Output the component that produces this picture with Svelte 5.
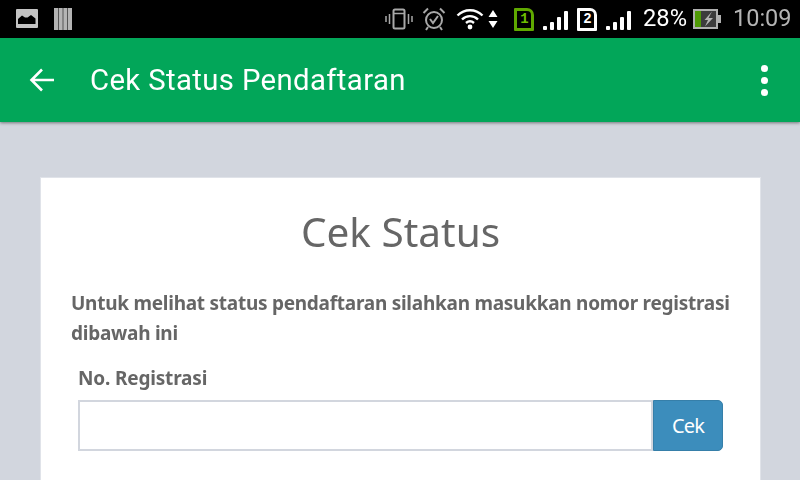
<script>
  const bars = [4, 8, 13, 19];
</script>

<div class="screen">
  <header class="status">
    <div class="left">
      <svg width="24" height="20" viewBox="0 0 24 20"><rect x="0" y="0" width="22" height="19" rx="1" fill="#c4c4c4"/><path d="M2 15V10L6 6.500L9 8.500H11.500L15 6L19.500 9.500V15Z" fill="#000"/></svg>
      <svg width="20" height="22" viewBox="0 0 20 22"><rect x="0" y="0" width="18" height="22" fill="#b4b4b4"/><path d="M4.500 0V22M9 0V22M13.500 0V22" stroke="#555" stroke-width="1"/></svg>
    </div>
    <div class="right">
      <svg class="vib" width="28" height="24" viewBox="0 0 28 24" fill="none" stroke="#a8a8a8"><rect x="8.500" y="2.500" width="11" height="19" rx="1.500" stroke-width="2"/><path d="M9 6.500H19" stroke-width="1.500"/><path d="M4.500 7V17M1 9V15M23.500 7V17M27 9V15" stroke-width="1.500"/></svg>
      <svg class="alarm" width="24" height="24" viewBox="0 0 24 24" fill="none" stroke="#a8a8a8" stroke-width="2"><circle cx="12" cy="13" r="8"/><path d="M8 12L11 16L16 9M1.500 6L6 1.500M22.500 6L18 1.500M6 20L4 23M18 20L20 23"/></svg>
      <svg class="wifi" width="28" height="22" viewBox="0 0 28 22" fill="none" stroke="#fff" stroke-width="2.400"><path d="M1.500 7.500C8.500 .5 19.500 .5 26.500 7.500M6 11.500C10.500 7 17.500 7 22 11.500M10 15C12.500 12.800 15.500 12.800 18 15"/><circle cx="14" cy="19" r="2.400" fill="#fff" stroke="none"/></svg>
      <svg class="updown" width="10" height="20" viewBox="0 0 10 20" fill="#fff"><path d="M5 1L9.500 8H.5ZM5 19L9.500 12H.5Z"/></svg>
      <div class="sim one"><span>1</span></div>
      <svg class="signal" width="26" height="22" viewBox="0 0 26 22" fill="#fff">
        {#each bars as h, i}<rect x={i * 7} y={22 - h} width="4" height={h} rx="1"/>{/each}
      </svg>
      <div class="sim two"><span>2</span></div>
      <svg class="signal second" width="26" height="22" viewBox="0 0 26 22" fill="#fff">
        {#each bars as h, i}<rect x={i * 7} y={22 - h} width="4" height={h} rx="1"/>{/each}
      </svg>
      <span class="pct">28%</span>
      <svg class="batt" width="29" height="20" viewBox="0 0 29 20"><rect x="1" y="1" width="23" height="18" fill="#3c3c3c" stroke="#b0b0b0" stroke-width="2"/><rect x="2" y="2" width="6" height="16" fill="#4f9a06"/><rect x="25" y="6" width="3" height="8" fill="#b0b0b0"/><path d="M19 2.500L11.500 11H15L12 17.500L20 9H15.500Z" fill="#b4b4b4"/></svg>
      <span class="time">10:09</span>
    </div>
  </header>

  <div class="appbar">
    <svg class="back" width="26" height="24" viewBox="0 0 26 24" fill="none" stroke="#fff" stroke-width="2.600"><path d="M25 12H3M13 1.500L2.500 12L13 22.500"/></svg>
    <h1>Cek Status Pendaftaran</h1>
    <div class="dots"><i></i><i></i><i></i></div>
  </div>

  <main>
    <section class="card">
      <h2>Cek Status</h2>
      <p>Untuk melihat status pendaftaran silahkan masukkan nomor registrasi dibawah ini</p>
      <div class="form">
        <label for="reg">No. Registrasi</label>
        <div class="group">
          <input id="reg" type="text" />
          <button type="button">Cek</button>
        </div>
      </div>
    </section>
  </main>
</div>

<style>
  :global(body) { margin: 0; background: #d2d6de; }
  .screen { width: 800px; height: 480px; overflow: hidden; display: flex; flex-direction: column; background: #d2d6de; font-family: "Noto Sans", sans-serif; }
  .status { flex: 0 0 38px; background: #000; display: flex; justify-content: space-between; align-items: center; box-sizing: border-box; padding: 0 8px 0 16px; }
  .left { display: flex; align-items: center; gap: 14px; }
  .right { display: flex; align-items: center; }
  .vib { margin-right: 9px; }
  .alarm { margin-right: 10px; }
  .wifi { margin-right: 4px; }
  .updown { margin-right: 16px; }
  .sim { box-sizing: border-box; width: 20px; height: 23px; border-radius: 1px 7px 1px 1px; display: flex; align-items: center; justify-content: center; font: 700 14px/1 "Liberation Mono", monospace; margin-right: 9px; }
  .sim.one { border: 3px solid #5fa800; color: #6fbf00; margin-right: 9px; }
  .sim.two { border: 3px solid #fff; color: #fff; margin-right: 9px; }
  .signal { margin-right: 8px; }
  .signal.second { margin-right: 11px; }
  .pct { color: #fff; font: 400 23.700px/1 Roboto, sans-serif; margin-right: 6px; will-change: transform; }
  .batt { margin-right: 11px; }
  .time { color: #b4b4b4; font: 400 23.500px/1 Roboto, sans-serif; will-change: transform; }

  .appbar { flex: 0 0 84px; background: #02a659; display: flex; align-items: center; box-sizing: border-box; padding: 2px 32px 0 29px; box-shadow: 0 1px 3px rgba(0,0,0,.45); position: relative; }
  .back { margin-right: 35px; margin-top: -2px; }
  h1 { flex: 1; margin: 0; color: #fff; font: 400 29.300px/1 Roboto, sans-serif; letter-spacing: .38px; will-change: transform; }
  .dots { display: flex; flex-direction: column; gap: 5px; margin-top: -2px; }
  .dots i { width: 7px; height: 7px; border-radius: 50%; background: #fff; }

  main { flex: 1; padding: 55px 40px 0 40px; }
  .card { box-sizing: border-box; width: 721px; height: 330px; background: #fff; border: 1px solid #e0e3e9; padding: 26px 30px 0; color: #666; }
  h2 { margin: 0; text-align: center; font: 400 40.500px/56px "Noto Sans", sans-serif; color: #666; will-change: transform; }
  p { margin: 28px 0 0; font-weight: 700; font-size: 19px; line-height: 30px; letter-spacing: -.26px; color: #666; will-change: transform; }
  .form { padding: 0 7px 0 7px; }
  label { display: block; margin-top: 16px; font-weight: 700; font-size: 19px; line-height: 28px; letter-spacing: -.17px; color: #666; will-change: transform; }
  .group { display: flex; margin-top: 8px; height: 51px; }
  input { flex: 1; min-width: 0; box-sizing: border-box; height: 51px; border: 2px solid #d2d6de; background: #fff; padding: 0; outline: none; }
  button { flex: 0 0 70px; height: 51px; box-sizing: border-box; border: 1px solid #367fa9; border-radius: 0 5px 5px 0; background: #3c8dbc; color: #fff; font: 400 20px/1 "Noto Sans", sans-serif; letter-spacing: -.8px; padding: 0; }
</style>
